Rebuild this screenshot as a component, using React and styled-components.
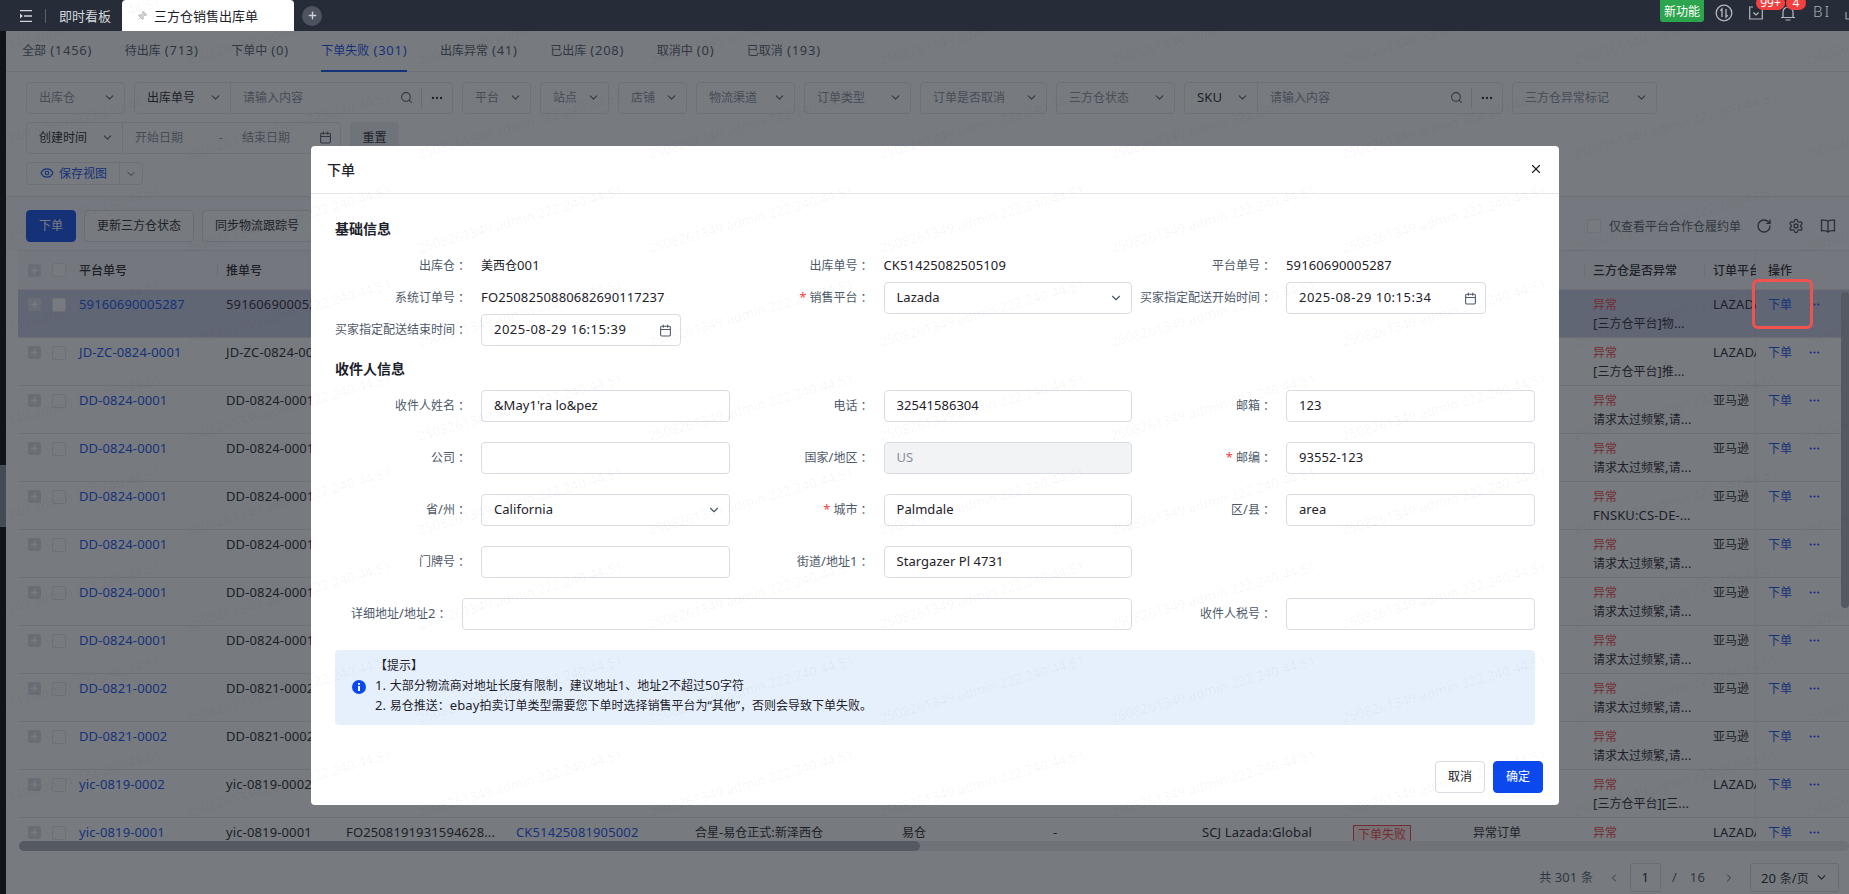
import React from "react";
import styled, { createGlobalStyle } from "styled-components";
import {
  Calendar,
  ChevronDown,
  ChevronLeft,
  ChevronRight,
  Ellipsis,
  Eye,
  Pin,
  Plus,
  RotateCw,
  Search,
  Settings,
  X,
} from "lucide-react";

const GlobalStyle = createGlobalStyle`
  * { box-sizing: border-box; }
  html, body { margin: 0; padding: 0; height: 100%; overflow: hidden; }
  body {
    font-family: "Noto Sans", "Noto Sans CJK SC", sans-serif;
    font-size: 12px;
    color: #1d2129;
    background: #fff;
  }
`;

const LatinRun = styled.span`
  font-size: 13px;
  letter-spacing: 0.13px;
`;

// the reference sets CJK at 12px, its latin text runs a little wider
const Mix = ({ children }) =>
  String(children)
    .split(/([\u0000-\u007f]+)/)
    .map((part, i) => (i % 2 ? <LatinRun key={i}>{part}</LatinRun> : part));

const Page = styled.div`
  position: relative;
  width: 1849px;
  height: 894px;
  overflow: hidden;
  display: flex;
  flex-direction: column;
`;

/* ---------- top bar ---------- */
const TopBar = styled.header`
  height: 31px;
  flex: none;
  background: #262d38;
  display: flex;
  align-items: center;
  overflow: hidden;
  padding-left: 20px;
`;

const BarDivider = styled.i`
  width: 1px;
  height: 14px;
  background: #596070;
  margin-left: ${(p) => p.$left}px;
`;

const BoardTab = styled.span`
  margin-left: 13px;
  width: 63px;
  font-size: 13px;
  color: #d5d8de;
`;

const ActiveTab = styled.div`
  width: 172px;
  height: 31px;
  background: #fff;
  border-radius: 4px 4px 0 0;
  display: flex;
  align-items: center;
  padding-left: 15px;
  gap: 7px;
  font-size: 13px;
  color: #1d2129;
  svg {
    color: #a9adb4;
    fill: #d5d7db;
    transform: rotate(45deg);
  }
`;

const AddTab = styled.span`
  width: 20px;
  height: 20px;
  border-radius: 50%;
  margin-left: 8px;
  background: #4d5460;
  color: #cfd3d9;
  display: flex;
  align-items: center;
  justify-content: center;
`;

const NewFeature = styled.span`
  margin-left: auto;
  align-self: flex-start;
  width: 44px;
  height: 22px;
  border-radius: 0 0 3px 3px;
  background: #2da44e;
  color: #fff;
  display: flex;
  align-items: center;
  justify-content: center;
`;

const IconSlot = styled.span`
  position: relative;
  width: 32px;
  height: 31px;
  margin-left: ${(p) => p.$left || 0}px;
  margin-top: -6px;
  display: flex;
  align-items: center;
  justify-content: center;
  color: #b4b8bf;
`;

const Badge = styled.b`
  position: absolute;
  top: -1px;
  left: ${(p) => p.$left}px;
  height: 14px;
  width: ${(p) => p.$width}px;
  border-radius: 7px;
  background: #f23f3f;
  color: #fff;
  font-size: 12px;
  font-weight: 400;
  line-height: 14px;
  text-align: center;
`;

const UserName = styled.span`
  margin-left: 9px;
  margin-top: -9px;
  font-size: 15px;
  letter-spacing: 2px;
  width: 32px;
  color: #a6abb3;
  font-weight: 300;
`;

/* ---------- page body ---------- */
const Shell = styled.div`
  flex: 1;
  min-height: 0;
  display: flex;
`;

const Rail = styled.aside`
  width: 6px;
  flex: none;
  background: #000;
  padding-top: 434px;
  &::after {
    content: "";
    display: block;
    height: 62px;
    background: #818a99;
  }
`;

const Main = styled.main`
  flex: 1;
  min-width: 0;
  display: flex;
  flex-direction: column;
  background: #fff;
`;

const StatusTabs = styled.nav`
  height: 41px;
  flex: none;
  display: flex;
  gap: 32.5px;
  padding-left: 16px;
  border-bottom: 1px solid #e5e6eb;
`;

const StatusTab = styled.span`
  height: 41px;
  line-height: 38px;
  white-space: nowrap;
  color: ${(p) => (p.$active ? "#0b4bf0" : "#4e5969")};
  border-bottom: 2px solid ${(p) => (p.$active ? "#0b4bf0" : "transparent")};
  ${LatinRun} {
    letter-spacing: 0.75px;
  }
`;

const Filters = styled.section`
  flex: none;
  padding: 10px 0 11px 20px;
  display: flex;
  flex-direction: column;
  gap: 8px;
  border-bottom: 1px solid #e5e6eb;
`;

const FilterRow = styled.div`
  display: flex;
  gap: 9px;
`;

const FilterBox = styled.div`
  width: ${(p) => p.$width}px;
  height: 32px;
  flex: none;
  display: flex;
  align-items: center;
  border: 1px solid #e5e6eb;
  border-radius: 4px;
  color: #86909c;
`;

const SelectPart = styled.div`
  width: ${(p) => p.$width || "100%"};
  height: 100%;
  flex: none;
  display: flex;
  align-items: center;
  justify-content: space-between;
  padding: 0 8px 2px 12px;
  color: ${(p) => (p.$dark ? "#1d2129" : "#86909c")};
  svg { color: #4e5969; }
`;

const TextPart = styled.div`
  flex: 1;
  height: 100%;
  display: flex;
  align-items: center;
  padding: 0 8px 2px 12px;
  border-left: 1px solid #e5e6eb;
  color: #86909c;
  svg { color: #4e5969; }
`;

const Grow = styled.span`
  flex: 1;
`;

const MoreButton = styled.span`
  width: 31px;
  height: 20px;
  flex: none;
  display: flex;
  align-items: center;
  justify-content: center;
  border-left: 1px solid #d9dce2;
  color: #1d2129;
`;

const SearchGroup = ({ label, width, selectWidth }) => (
  <FilterBox $width={width}>
    <SelectPart $width={`${selectWidth}px`} $dark>
      {label}
      <ChevronDown size={13} />
    </SelectPart>
    <TextPart>
      请输入内容
      <Grow />
      <Search size={13} />
    </TextPart>
    <MoreButton>
      <Ellipsis size={14} />
    </MoreButton>
  </FilterBox>
);

const DateText = styled.span`
  width: ${(p) => p.$width}px;
  flex: none;
`;

const ResetButton = styled.button`
  width: 49px;
  height: 32px;
  border: 0;
  border-radius: 4px;
  padding: 0 0 2px;
  background: #ebedf2;
  color: #1d2129;
  font: inherit;
`;

const SaveView = styled.div`
  width: 117px;
  height: 23px;
  display: flex;
  align-items: center;
  border: 1px solid #e5e6eb;
  border-radius: 4px;
  color: #0b4bf0;
`;

const SaveLabel = styled.span`
  flex: 1;
  display: flex;
  align-items: center;
  gap: 5px;
  padding: 0 0 2px 13px;
`;

const SaveArrow = styled.span`
  width: 23px;
  height: 100%;
  display: flex;
  align-items: center;
  justify-content: center;
  border-left: 1px solid #e5e6eb;
  color: #4e5969;
`;

const Toolbar = styled.div`
  flex: none;
  display: flex;
  align-items: center;
  gap: 8px;
  padding: 13px 13px 8px 20px;
  background: #fafbfc;
`;

const ToolButton = styled.button`
  width: ${(p) => p.$width}px;
  height: 32px;
  padding: 0 0 2px;
  border-radius: 4px;
  font: inherit;
  border: 1px solid ${(p) => (p.$primary ? "#0b4bf0" : "#dcdfe6")};
  background: ${(p) => (p.$primary ? "#0b4bf0" : "#fff")};
  color: ${(p) => (p.$primary ? "#fff" : "#1d2129")};
`;

const ToolRight = styled.div`
  margin-left: auto;
  display: flex;
  align-items: center;
  color: #4e5969;
`;

const Check = styled.i`
  width: 14px;
  height: 14px;
  flex: none;
  display: block;
  border: 1.5px solid #e5e6eb;
  border-radius: 2px;
  background: #fff;
`;

const OnlyLabel = styled.span`
  margin: 0 15px 0 8px;
`;

const ToolIcon = styled.span`
  width: 16px;
  height: 16px;
  margin-left: ${(p) => p.$left || 0}px;
  color: #3a3f4a;
  display: flex;
`;

/* ---------- table ---------- */
const COLUMNS = "199px 120px 170px 179px 207px 151px 149px 151px 120px 120px 120px 52px 93px";

const TableWrap = styled.div`
  position: relative;
  flex: 1;
  min-height: 0;
  overflow: hidden;
  margin-left: 12px;
  background: #fff;
  border-top: 1px solid #e5e6eb;
`;

const HeaderRow = styled.div`
  display: grid;
  grid-template-columns: ${COLUMNS};
  height: 39px;
  background: #f7f8fa;
  border-bottom: 1px solid #e5e6eb;
  align-items: center;
`;

const HeadCell = styled.div`
  position: relative;
  padding-left: 9px;
  font-weight: 500;
  white-space: nowrap;
  overflow: hidden;
  &::before {
    content: "";
    display: ${(p) => (p.$bar ? "block" : "none")};
    position: absolute;
    left: 0;
    top: 2px;
    bottom: 2px;
    width: 1px;
    background: #dfe1e6;
  }
`;

const Row = styled.div`
  display: grid;
  grid-template-columns: ${COLUMNS};
  height: 48px;
  background: ${(p) => (p.$selected ? "#c8cde6" : "#fff")};
  border-bottom: 1px solid #e5e6eb;
`;

const Cell = styled.div`
  padding: 5px 0 0 9px;
  line-height: 19px;
  white-space: nowrap;
  overflow: hidden;
  color: ${(p) => (p.$error ? "#f53f3f" : p.$link ? "#0b4bf0" : "#1d2129")};
`;

const FirstCell = styled(Cell)`
  display: flex;
  padding-left: 10px;
  padding-top: 5px;
`;

const FirstHead = styled.div`
  display: flex;
  align-items: center;
  padding-left: 10px;
  font-weight: 500;
`;

const ExpandBox = styled.span`
  width: 13px;
  height: 13px;
  margin-top: ${(p) => (p.$head ? 0 : 3)}px;
  flex: none;
  border-radius: 2px;
  background: #dcdfe6;
  color: #fff;
  display: flex;
  align-items: center;
  justify-content: center;
  margin-right: 11px;
`;

const RowCheck = styled(Check)`
  margin: ${(p) => (p.$head ? 0 : 3)}px 13px 0 0;
`;

const RowLink = styled.span`
  color: #0b4bf0;
`;

const ErrorText = styled.span`
  color: #f53f3f;
  display: block;
`;

const FailTag = styled.span`
  display: inline-block;
  width: 58px;
  height: 20px;
  margin-top: 2px;
  line-height: 18px;
  text-align: center;
  color: #f53f3f;
  border: 1px solid #f53f3f;
  background: #ffece8;
`;

const ActionCell = styled.div`
  display: flex;
  align-items: flex-start;
  gap: 16px;
  padding: 5px 0 0 12px;
  line-height: 19px;
  color: #0b4bf0;
  box-shadow: -1px 0 0 rgba(0, 0, 0, 0.05);
  background: ${(p) => (p.$selected ? "#c8cde6" : "#fff")};
  svg { margin-top: 3px; }
`;

const ActionHead = styled.div`
  padding-left: 12px;
  height: 100%;
  display: flex;
  align-items: center;
  font-weight: 500;
  box-shadow: -1px 0 0 rgba(0, 0, 0, 0.05);
`;

const VScroll = styled.span`
  position: absolute;
  right: 0;
  top: 41px;
  width: 8px;
  height: 316px;
  border-radius: 4px;
  background: #a8acb6;
`;

const HScroll = styled.div`
  height: 10px;
  flex: none;
  margin-left: 13px;
  background: #eceef1;
  border-radius: 5px;
  &::after {
    content: "";
    display: block;
    width: 901px;
    height: 10px;
    border-radius: 5px;
    background: #a8acb6;
  }
`;

const Pagination = styled.footer`
  height: 43px;
  flex: none;
  padding: 12px 10px 0 0;
  display: flex;
  align-items: flex-start;
  justify-content: flex-end;
  color: #4e5969;
`;

const PageTotal = styled.span`
  line-height: 29px;
  margin-right: 15px;
`;

const PageInput = styled.span`
  width: 31px;
  height: 29px;
  margin: 0 11px 0 10px;
  border: 1px solid #dcdfe6;
  border-radius: 2px;
  line-height: 27px;
  text-align: center;
  color: #1d2129;
`;

const PageText = styled.span`
  line-height: 29px;
  margin-right: ${(p) => p.$right}px;
`;

const PageArrow = styled.span`
  height: 29px;
  display: flex;
  align-items: center;
  margin-right: ${(p) => p.$right || 0}px;
`;

const PageSize = styled.span`
  width: 89px;
  height: 29px;
  display: flex;
  align-items: center;
  justify-content: space-between;
  padding: 0 10px;
  border: 1px solid #dcdfe6;
  border-radius: 2px;
  color: #1d2129;
`;

/* ---------- modal ---------- */
const Mask = styled.div`
  position: absolute;
  top: 31px;
  left: 0;
  right: 0;
  bottom: 0;
  z-index: 10;
  background: rgba(29, 33, 41, 0.6);
  padding: 115px 290px 0 311px;
`;

const Modal = styled.div`
  height: 659px;
  background: #fff;
  border-radius: 4px;
  display: flex;
  flex-direction: column;
`;

const ModalHeader = styled.div`
  height: 48px;
  flex: none;
  display: flex;
  align-items: center;
  justify-content: space-between;
  padding: 0 16px 2px;
  font-size: 14px;
  font-weight: 500;
  border-bottom: 1px solid #e5e6eb;
`;

const ModalBody = styled.div`
  padding: 0 24px;
`;

const SectionTitle = styled.h4`
  margin: ${(p) => p.$top}px 0 11px;
  font-size: 14px;
  line-height: 20px;
  font-weight: 600;
  color: #1d2129;
`;

const FormGrid = styled.div`
  display: grid;
  grid-template-columns: repeat(3, 394.5px);
  column-gap: 8px;
  row-gap: ${(p) => p.$gap}px;
`;

const FormItem = styled.div`
  display: grid;
  grid-template-columns: ${(p) => (p.$wide ? "112.5px 1fr" : "132px 248.5px")};
  grid-column: ${(p) => (p.$wide ? "span 2" : "auto")};
  column-gap: 14px;
  align-items: center;
  min-height: 32px;
`;

const Label = styled.label`
  display: flex;
  justify-content: flex-end;
  align-items: center;
  white-space: nowrap;
  padding-bottom: 2px;
  color: #4e5969;
  &::before {
    content: "${(p) => (p.$required ? "*" : "")}";
    color: #f53f3f;
    margin-right: 3px;
    font-size: 13px;
  }
`;

const Colon = styled.span`
  font-family: "Noto Sans CJK TC", sans-serif;
`;

const ReadValue = styled.span`
  padding-bottom: 2px;
`;

const FieldBox = styled.div`
  display: flex;
  align-items: center;
  height: 32px;
  width: ${(p) => (p.$short ? "199.5px" : "auto")};
  padding: 0 8px 0 12px;
  border: 1px solid #d9dce3;
  border-radius: 4px;
  background: ${(p) => (p.$disabled ? "#f2f3f5" : "transparent")};
  svg { color: #4e5969; flex: none; }
`;

const FieldInput = styled.input`
  flex: 1;
  min-width: 0;
  padding: 0 0 2px;
  border: 0;
  outline: 0;
  background: transparent;
  font-family: "Noto Sans", "Noto Sans CJK SC", sans-serif;
  font-size: 13px;
  letter-spacing: ${(p) => (p.$wide ? "0.5px" : "0.05px")};
  color: ${(p) => (p.disabled ? "#86909c" : "#1d2129")};
`;

const Item = ({ label, required, wide, children }) => (
  <FormItem $wide={wide}>
    <Label $required={required}>
      <span><Mix>{label}</Mix></span>
      <Colon>：</Colon>
    </Label>
    {children}
  </FormItem>
);

const Field = ({ value = "", disabled, short, icon }) => (
  <FieldBox $disabled={disabled} $short={short}>
    <FieldInput defaultValue={value} disabled={disabled} readOnly={!disabled} $wide={short} />
    {icon}
  </FieldBox>
);

const Tip = styled.div`
  margin-top: 20px;
  height: 75px;
  display: flex;
  align-items: center;
  gap: 9px;
  padding: 0 0 2px 17px;
  background: #e6f0fd;
  border-radius: 4px;
  line-height: 18.7px;
  color: #1d2129;
`;

const ModalFooter = styled.div`
  margin-top: auto;
  padding: 0 16px 12px;
  display: flex;
  justify-content: flex-end;
  gap: 8px;
`;

const FooterButton = styled.button`
  width: 50px;
  height: 32px;
  padding: 0 0 3px;
  border-radius: 4px;
  font: inherit;
  border: 1px solid ${(p) => (p.$primary ? "#0b49ef" : "#d9dce3")};
  background: ${(p) => (p.$primary ? "#0b49ef" : "#fff")};
  color: ${(p) => (p.$primary ? "#fff" : "#1d2129")};
`;

const RedBox = styled.span`
  position: absolute;
  left: 1752px;
  top: 279px;
  width: 61px;
  height: 50px;
  z-index: 30;
  border: 3px solid #f0524f;
  border-radius: 6px;
`;

const Watermark = styled.div`
  position: absolute;
  inset: 0;
  z-index: 20;
  overflow: hidden;
  pointer-events: none;
`;

const WatermarkGrid = styled.div`
  display: grid;
  grid-template-columns: repeat(10, 231px);
  grid-auto-rows: 94px;
  margin: -120px 0 0 -42px;
`;

const WatermarkText = styled.span`
  align-self: end;
  white-space: nowrap;
  font-family: "Noto Sans", sans-serif;
  font-size: 13.5px;
  line-height: 16px;
  color: rgba(0, 0, 0, 0.045);
  transform-origin: 0 100%;
  transform: rotate(-16deg);
`;

/* ---------- small drawings ---------- */
const MenuIcon = () => (
  <svg width="12" height="12" viewBox="0 0 12 12" fill="none" stroke="#cfd3d9" strokeWidth="1.3">
    <path d="M0 .7h12M4 6h8M0 11.3h12" />
    <path d="M0 3.5 2.8 6 0 8.5z" fill="#cfd3d9" stroke="none" />
  </svg>
);

const SwapIcon = () => (
  <svg width="18" height="18" viewBox="0 0 18 18" fill="none" stroke="currentColor" strokeWidth="1.3">
    <circle cx="9" cy="9" r="7.8" />
    <path d="M7 13V5L5.3 6.8M11 5v8l1.7-1.8" />
  </svg>
);

const TaskIcon = () => (
  <svg width="14" height="15" viewBox="0 0 14 15" fill="none" stroke="currentColor" strokeWidth="1.2">
    <path d="M4 2H.7v12h12.6V2H10" />
    <path d="M4.4 7.5 7 10l2.6-2.5" />
  </svg>
);

const BellIcon = () => (
  <svg width="14" height="16" viewBox="0 0 14 16" fill="none" stroke="currentColor" strokeWidth="1.2">
    <path d="M2 12V7a5 5 0 0 1 10 0v5M0 12.5h14M4.5 15h5" />
  </svg>
);

const CornerIcon = () => (
  <svg width="4" height="8" viewBox="0 0 4 8" fill="none" stroke="#a6abb3" strokeWidth="1.1">
    <path d="M1 0v7h3" />
  </svg>
);

const ColumnsIcon = () => (
  <svg width="16" height="16" viewBox="0 0 16 16" fill="none" stroke="currentColor" strokeWidth="1.3">
    <path d="M8 3.2C6.8 2 4 2 1.5 2.2v10.6C4 12.6 6.8 12.6 8 14c1.2-1.4 4-1.4 6.5-1.2V2.2C12 2 9.2 2 8 3.2zM8 3.2V14" />
  </svg>
);

const InfoIcon = () => (
  <svg width="14" height="14" viewBox="0 0 14 14">
    <circle cx="7" cy="7" r="7" fill="#0b49ef" />
    <path d="M6 3h2v1.7H6zM6 6h2v5H6z" fill="#fff" />
  </svg>
);

/* ---------- data ---------- */
const tabs = [
  "全部 (1456)",
  "待出库 (713)",
  "下单中 (0)",
  "下单失败 (301)",
  "出库异常 (41)",
  "已出库 (208)",
  "取消中 (0)",
  "已取消 (193)",
];

const selects = [
  ["平台", 69],
  ["站点", 69],
  ["店铺", 69],
  ["物流渠道", 99],
  ["订单类型", 107],
  ["订单是否取消", 127],
  ["三方仓状态", 119],
];

const freq = "请求太过频繁,请...";
const rows = [
  { id: "59160690005287", reason: "[三方仓平台]物...", platform: "LAZADA", selected: true },
  { id: "JD-ZC-0824-0001", reason: "[三方仓平台]推...", platform: "LAZADA" },
  { id: "DD-0824-0001", reason: freq, platform: "亚马逊" },
  { id: "DD-0824-0001", reason: freq, platform: "亚马逊" },
  { id: "DD-0824-0001", reason: "FNSKU:CS-DE-...", platform: "亚马逊" },
  { id: "DD-0824-0001", reason: freq, platform: "亚马逊" },
  { id: "DD-0824-0001", reason: freq, platform: "亚马逊" },
  { id: "DD-0824-0001", reason: freq, platform: "亚马逊" },
  { id: "DD-0821-0002", reason: freq, platform: "亚马逊" },
  { id: "DD-0821-0002", reason: freq, platform: "亚马逊" },
  { id: "yic-0819-0002", reason: "[三方仓平台][三...", platform: "LAZADA" },
  {
    id: "yic-0819-0001",
    reason: "",
    platform: "LAZADA",
    order: "FO2508191931594628...",
    outbound: "CK51425081905002",
    warehouse: "合星-易仓正式:新泽西仓",
    provider: "易仓",
    dash: "-",
    shop: "SCJ Lazada:Global",
    failed: true,
    type: "异常订单",
  },
];

const marks = Array.from({ length: 100 }, (_, i) => i);

const App = () => (
  <Page>
    <GlobalStyle />
    <TopBar>
      <MenuIcon />
      <BarDivider $left={13} />
      <BoardTab>即时看板</BoardTab>
      <ActiveTab>
        <Pin size={10} />
        三方仓销售出库单
      </ActiveTab>
      <AddTab>
        <Plus size={11} strokeWidth={3} />
      </AddTab>
      <NewFeature>新功能</NewFeature>
      <IconSlot $left={4}>
        <SwapIcon />
      </IconSlot>
      <IconSlot>
        <TaskIcon />
        <Badge $left={16} $width={29}>99+</Badge>
      </IconSlot>
      <IconSlot>
        <BellIcon />
        <Badge $left={14} $width={20}>4</Badge>
      </IconSlot>
      <UserName>BI</UserName>
      <CornerIcon />
    </TopBar>

    <Shell>
      <Rail />
      <Main>
        <StatusTabs>
          {tabs.map((tab, i) => (
            <StatusTab key={tab} $active={i === 3}>
              <Mix>{tab}</Mix>
            </StatusTab>
          ))}
        </StatusTabs>

        <Filters>
          <FilterRow>
            <FilterBox $width={99}>
              <SelectPart>
                出库仓
                <ChevronDown size={13} />
              </SelectPart>
            </FilterBox>
            <SearchGroup label="出库单号" width={319} selectWidth={95} />
            {selects.map(([label, width]) => (
              <FilterBox key={label} $width={width}>
                <SelectPart>
                  {label}
                  <ChevronDown size={13} />
                </SelectPart>
              </FilterBox>
            ))}
            <SearchGroup label={<LatinRun>SKU</LatinRun>} width={319} selectWidth={72} />
            <FilterBox $width={145}>
              <SelectPart>
                三方仓异常标记
                <ChevronDown size={13} />
              </SelectPart>
            </FilterBox>
          </FilterRow>
          <FilterRow>
            <FilterBox $width={315}>
              <SelectPart $width="95px" $dark>
                创建时间
                <ChevronDown size={13} />
              </SelectPart>
              <TextPart>
                <DateText $width={84}>开始日期</DateText>
                <DateText $width={23}>-</DateText>
                <DateText $width={77}>结束日期</DateText>
                <Calendar size={13} />
              </TextPart>
            </FilterBox>
            <ResetButton>重置</ResetButton>
          </FilterRow>
          <SaveView>
            <SaveLabel>
              <Eye size={14} />
              保存视图
            </SaveLabel>
            <SaveArrow>
              <ChevronDown size={12} />
            </SaveArrow>
          </SaveView>
        </Filters>

        <Toolbar>
          <ToolButton $primary $width={50}>下单</ToolButton>
          <ToolButton $width={110}>更新三方仓状态</ToolButton>
          <ToolButton $width={110}>同步物流跟踪号</ToolButton>
          <ToolRight>
            <Check />
            <OnlyLabel>仅查看平台合作仓履约单</OnlyLabel>
            <ToolIcon>
              <RotateCw size={16} />
            </ToolIcon>
            <ToolIcon $left={16}>
              <Settings size={16} />
            </ToolIcon>
            <ToolIcon $left={16}>
              <ColumnsIcon />
            </ToolIcon>
          </ToolRight>
        </Toolbar>

        <TableWrap>
          <HeaderRow>
            <FirstHead>
              <ExpandBox $head>
                <Plus size={9} strokeWidth={4} />
              </ExpandBox>
              <RowCheck $head />
              平台单号
            </FirstHead>
            <HeadCell $bar>推单号</HeadCell>
            <HeadCell />
            <HeadCell />
            <HeadCell />
            <HeadCell />
            <HeadCell />
            <HeadCell />
            <HeadCell />
            <HeadCell />
            <HeadCell $bar>三方仓是否异常</HeadCell>
            <HeadCell $bar>订单平台</HeadCell>
            <ActionHead>操作</ActionHead>
          </HeaderRow>
          {rows.map((row, i) => (
            <Row key={i} $selected={row.selected}>
              <FirstCell>
                <ExpandBox>
                  <Plus size={9} strokeWidth={4} />
                </ExpandBox>
                <RowCheck />
                <RowLink>
                  <Mix>{row.id}</Mix>
                </RowLink>
              </FirstCell>
              <Cell><Mix>{row.id}</Mix></Cell>
              <Cell><Mix>{row.order || ""}</Mix></Cell>
              <Cell $link><Mix>{row.outbound || ""}</Mix></Cell>
              <Cell><Mix>{row.warehouse || ""}</Mix></Cell>
              <Cell><Mix>{row.provider || ""}</Mix></Cell>
              <Cell><Mix>{row.dash || ""}</Mix></Cell>
              <Cell><Mix>{row.shop || ""}</Mix></Cell>
              <Cell>{row.failed && <FailTag>下单失败</FailTag>}</Cell>
              <Cell><Mix>{row.type || ""}</Mix></Cell>
              <Cell>
                <ErrorText>异常</ErrorText>
                <Mix>{row.reason}</Mix>
              </Cell>
              <Cell><Mix>{row.platform}</Mix></Cell>
              <ActionCell $selected={row.selected}>
                下单
                <Ellipsis size={13} />
              </ActionCell>
            </Row>
          ))}
          <VScroll />
        </TableWrap>
        <HScroll />

        <Pagination>
          <PageTotal><Mix>共 301 条</Mix></PageTotal>
          <PageArrow><ChevronLeft size={12} /></PageArrow>
          <PageInput><Mix>1</Mix></PageInput>
          <PageText $right={13}><Mix>/</Mix></PageText>
          <PageText $right={18}><Mix>16</Mix></PageText>
          <PageArrow $right={15}><ChevronRight size={12} /></PageArrow>
          <PageSize>
            <span><Mix>20 条/页</Mix></span>
            <ChevronDown size={13} />
          </PageSize>
        </Pagination>
      </Main>
    </Shell>

    <Mask>
      <Modal>
        <ModalHeader>
          下单
          <X size={14} />
        </ModalHeader>
        <ModalBody>
          <SectionTitle $top={25}>基础信息</SectionTitle>
          <FormGrid $gap={0}>
            <Item label="出库仓"><ReadValue><Mix>美西仓001</Mix></ReadValue></Item>
            <Item label="出库单号"><ReadValue><Mix>CK51425082505109</Mix></ReadValue></Item>
            <Item label="平台单号"><ReadValue><Mix>59160690005287</Mix></ReadValue></Item>
            <Item label="系统订单号"><ReadValue><Mix>FO2508250880682690117237</Mix></ReadValue></Item>
            <Item label="销售平台" required>
              <Field value="Lazada" icon={<ChevronDown size={14} />} />
            </Item>
            <Item label="买家指定配送开始时间">
              <Field short value="2025-08-29 10:15:34" icon={<Calendar size={13} />} />
            </Item>
            <Item label="买家指定配送结束时间">
              <Field short value="2025-08-29 16:15:39" icon={<Calendar size={13} />} />
            </Item>
          </FormGrid>

          <SectionTitle $top={13}>收件人信息</SectionTitle>
          <FormGrid $gap={20}>
            <Item label="收件人姓名"><Field value="&May1'ra lo&pez" /></Item>
            <Item label="电话"><Field value="32541586304" /></Item>
            <Item label="邮箱"><Field value="123" /></Item>
            <Item label="公司"><Field /></Item>
            <Item label="国家/地区"><Field value="US" disabled /></Item>
            <Item label="邮编" required><Field value="93552-123" /></Item>
            <Item label="省/州">
              <Field value="California" icon={<ChevronDown size={14} />} />
            </Item>
            <Item label="城市" required><Field value="Palmdale" /></Item>
            <Item label="区/县"><Field value="area" /></Item>
            <Item label="门牌号"><Field /></Item>
            <Item label="街道/地址1"><Field value="Stargazer Pl 4731" /></Item>
            <span />
            <Item label="详细地址/地址2" wide><Field /></Item>
            <Item label="收件人税号"><Field /></Item>
          </FormGrid>

          <Tip>
            <InfoIcon />
            <div>
              <div>【提示】</div>
              <div><Mix>1. 大部分物流商对地址长度有限制，建议地址1、地址2不超过50字符</Mix></div>
              <div><Mix>2. 易仓推送：ebay拍卖订单类型需要您下单时选择销售平台为“其他”，否则会导致下单失败。</Mix></div>
            </div>
          </Tip>
        </ModalBody>
        <ModalFooter>
          <FooterButton>取消</FooterButton>
          <FooterButton $primary>确定</FooterButton>
        </ModalFooter>
      </Modal>
    </Mask>

    <RedBox />

    <Watermark>
      <WatermarkGrid>
        {marks.map((i) => (
          <WatermarkText key={i}>2508261349 admin 222.240.44.51</WatermarkText>
        ))}
      </WatermarkGrid>
    </Watermark>
  </Page>
);

export default App;
